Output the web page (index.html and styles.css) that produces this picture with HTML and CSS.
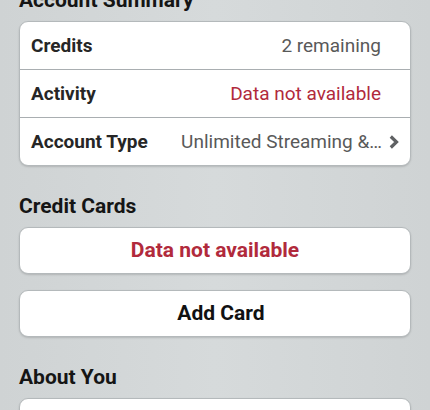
FILE: index.html
```html
<!DOCTYPE html>
<html lang="en">
<head>
    <meta charset="UTF-8">
    <meta name="viewport" content="width=device-width, initial-scale=1.0">
    <title>Account</title>
    <link rel="stylesheet" href="styles.css">
</head>
<body>
    <div class="page">
        <section class="section">
            <h2>Account Summary</h2>
            <div class="card">
                <div class="row">
                    <span class="label">Credits</span>
                    <span class="value">2 remaining</span>
                </div>
                <div class="row">
                    <span class="label">Activity</span>
                    <span class="value error">Data not available</span>
                </div>
                <div class="row">
                    <span class="label">Account Type</span>
                    <span class="value">Unlimited Streaming &amp;…</span>
                    <svg class="chevron" width="10" height="14" viewBox="0 0 10 14">
                        <path d="M1.8 1.5 L7.5 7 L1.8 12.5" fill="none" stroke="#5f6163" stroke-width="3.2"/>
                    </svg>
                </div>
            </div>
        </section>

        <section class="section">
            <h2>Credit Cards</h2>
            <div class="button error">Data not available</div>
            <div class="button add">Add Card</div>
        </section>

        <section class="section">
            <h2>About You</h2>
            <div class="card">
                <div class="row"></div>
            </div>
        </section>
    </div>
</body>
</html>
```

FILE: styles.css
```css
body {
    margin: 0;
    padding: 0;
    font-family: Roboto, "Liberation Sans", Arial, sans-serif;
    background: linear-gradient(90deg, #cfd3d4, #d6dadb 50%, #cfd3d4);
    color: #222;
    overflow: hidden;
}

.page {
    margin-top: -13px;
    padding: 0 19px;
}

.section {
    margin-bottom: 27px;
}

h2 {
    margin: 0 0 8px;
    font-size: 21px;
    line-height: 26px;
    font-weight: bold;
    color: #151515;
}

.card {
    background: #fff;
    border: 1px solid #b4b9bb;
    border-radius: 9px;
    box-shadow: 0 1px 2px rgba(0, 0, 0, 0.15);
    overflow: hidden;
}

.row {
    display: flex;
    align-items: center;
    height: 47px;
    padding: 0 11px;
    font-size: 19px;
}

.row + .row {
    border-top: 1px solid #a9aeb1;
}

.label {
    font-weight: bold;
    color: #262626;
    white-space: nowrap;
}

.value {
    margin-left: auto;
    padding-right: 18px;
    color: #595959;
    white-space: nowrap;
}

.chevron {
    margin-left: -11px;
}

.error {
    color: #b12a3c;
}

.button {
    height: 45px;
    line-height: 45px;
    margin-bottom: 16px;
    text-align: center;
    font-size: 21px;
    font-weight: bold;
    background: #fff;
    border: 1px solid #b4b9bb;
    border-radius: 9px;
    box-shadow: 0 1px 2px rgba(0, 0, 0, 0.15);
}

.button:last-child {
    margin-bottom: 0;
}

.add {
    padding-left: 12px;
    color: #111;
}
```
